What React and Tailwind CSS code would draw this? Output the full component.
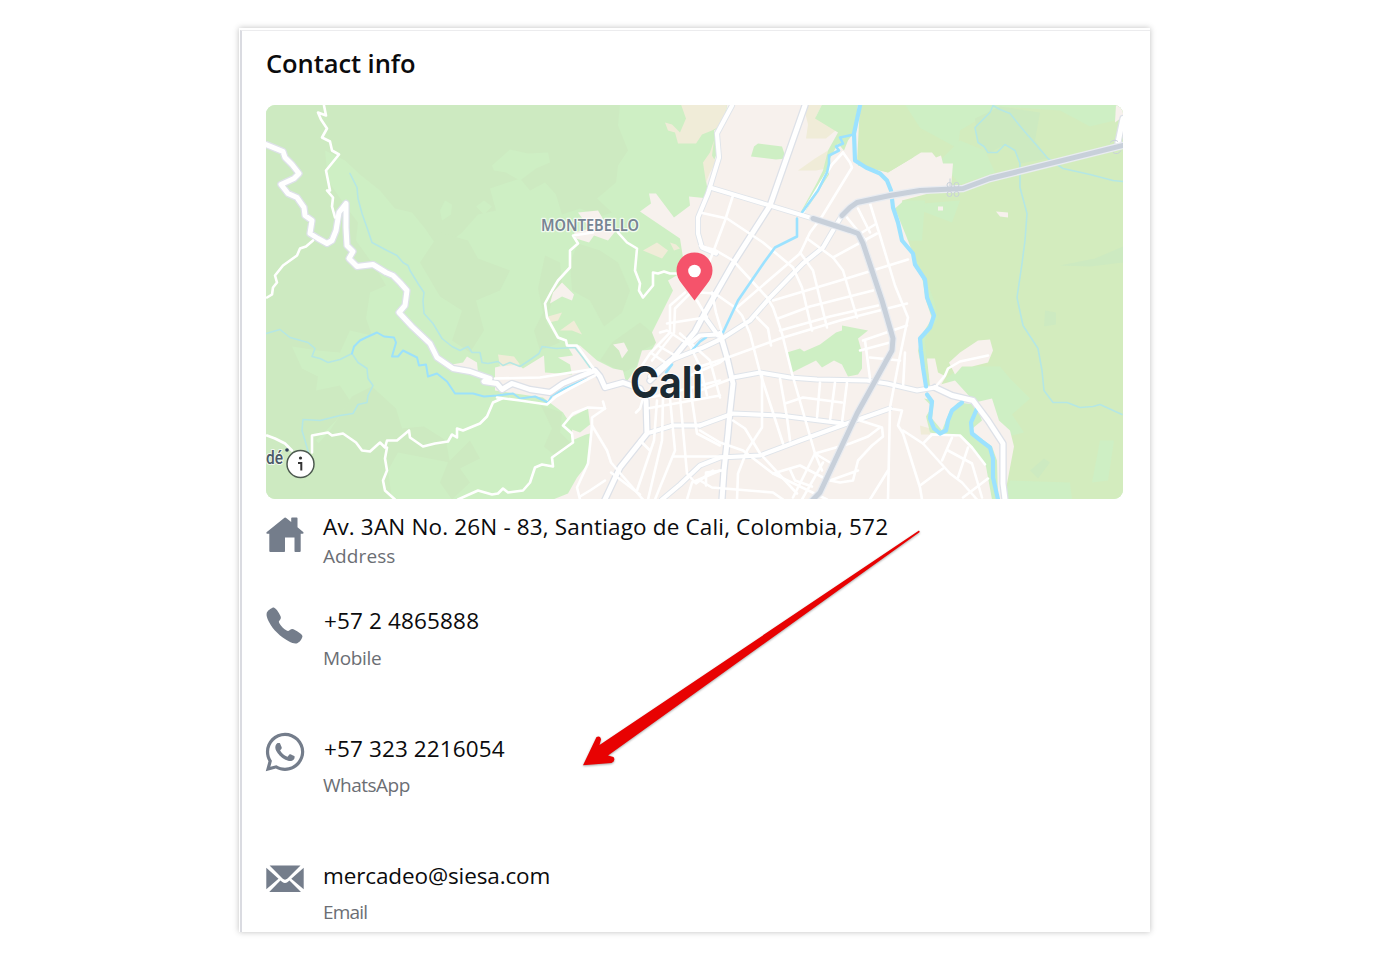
import { FaWhatsapp } from "react-icons/fa";
import { IoCall } from "react-icons/io5";

// the map is drawn in its own coordinate space, see viewBox below
const darkWoods = [
    "266,104 620,104 618,125 628,150 618,165 616,182 597,198 612,212 600,216 580,208 562,214 556,194 545,182 530,190 520,178 490,188 496,210 478,214 462,232 440,250 425,228 412,212 395,208 380,190 360,174 345,160 325,150 328,180 345,205 358,222 356,240 376,268 386,285 370,292 366,318 372,335 350,330 340,352 318,350 292,346 302,368 318,376 316,390 340,385 350,400 336,420 316,440 330,455 300,499 266,499",
    "352,396 372,386 396,408 402,428 424,426 446,440 450,462 398,452 388,470 392,499 300,499 312,450 330,430",
    "545,255 560,262 562,282 552,300 546,322 560,342 540,350 534,330 543,312 538,288",
    "578,243 600,250 618,262 630,290 622,312 604,326 590,300 572,290 570,262",
    "440,232 468,240 478,258 510,270 500,290 476,300 484,330 470,352 452,340 462,310 440,296 420,262",
    "652,332 656,343 642,350 636,366 623,372 600,360 612,342 640,322",
    "541,405 562,412 560,432 572,444 556,456 544,446 552,428",
    "490,420 470,440 480,458 460,468 470,482 452,499 440,482 448,462",
];

const lightWoods = [
    "492,165 510,149 528,153 548,152 550,162 536,168 520,180 506,172 494,170",
    "440,210 445,200 452,204 451,214 442,220",
    "476,206 484,200 492,206 484,214",
];

const eastPatches = [
    "975,118 1000,106 1040,112 1035,140 1048,158 1020,163 1015,150 1005,144 990,152 978,142",
    "1060,265 1095,258 1123,246 1123,262 1090,266",
    "1045,310 1056,312 1056,324 1044,326",
    "1030,470 1044,458 1050,462 1038,478",
];

const eastMeadows = [
    "858,104 1122,104 1123,118 1090,126 1060,110 1000,106 960,130 958,148 925,130 900,118",
    "940,160 960,140 985,150 995,172 960,184",
    "898,205 960,200 952,222 915,208",
    "946,378 962,366 1000,366 1010,378 1030,398 1012,414 1024,432 1000,438 984,406 962,398",
    "1010,480 1070,482 1072,499 1004,499",
    "1100,440 1114,440 1108,480 1092,482",
];

const sand = [
    "681,104 727,104 723,124 712,130 702,134 696,143 678,143 675,132 668,130 665,122 672,124 680,132 686,118",
    "714,140 712,155 716,162 710,172 706,182 703,162 710,152",
    "803,104 822,104 816,116 838,128 826,138 806,138 808,124",
    "798,170 815,158 828,150 826,168 816,170",
    "643,250 657,242 668,250 662,258",
    "670,242 676,244 680,248 674,250",
    "548,316 562,312 558,320 549,322",
    "560,330 574,320 582,334 572,330",
    "958,410 968,412 970,432 958,436 954,424",
    "498,354 514,356 520,364 500,366",
    "920,425 930,428 930,434 921,434",
];

const urban = [
    "727,104 870,104 858,165 888,172 913,157 921,152 932,152 936,157 941,155 943,163 953,163 951,187 902,200 908,240 920,272 930,300 936,318 922,340 926,388 955,380 975,402 992,398 999,420 1010,430 1014,446 1004,499 553,499 568,493 577,477 588,463 590,433 586,434 572,440 572,426 563,412 543,397 495,390 495,367 515,362 523,368 544,355 545,372 572,374 570,364 558,357 573,355 567,345 580,345 597,360 613,368 623,370 626,382 637,367 642,350 652,349 656,342 652,332 673,290 668,280 685,270 680,238 640,211 651,203 649,193 656,193 665,205 674,217 690,205 689,196 709,198 706,180 718,150 714,130 724,124",
    "578,212 598,210 604,220 616,230 608,240 594,235 589,242 576,238 574,232 590,228",
    "553,292 562,282 568,288 574,294 572,300 562,296 550,303",
    "452,364 463,362 467,356 477,362 478,372 460,370",
    "949,362 960,352 978,340 990,339 993,350 988,362 972,366 962,366 955,374",
    "613,344 624,342 628,350 622,358 619,350",
    "996,211 1008,212 1008,217 1000,216",
    "938,206 943,206 943,210 938,210",
    "1116,104 1123,106 1123,116 1115,122",
    "927,358 935,358 938,372 946,376 940,386 930,386",
];

const parks = [
    "822,104 858,104 854,132 848,140 844,150 838,143 829,160 829,174 806,210 800,213 817,182 823,170 828,150 838,132 815,118",
    "754,146 758,143 782,146 786,158 776,159 751,156",
    "787,352 800,348 804,351 820,344 836,332 842,330 842,325 868,330 858,338 862,352 862,368 858,374 848,376 842,364 834,360 822,367 816,360 792,372",
    "910,250 918,262 928,284 934,300 938,318 924,340 929,380 926,390 918,350 922,334 932,318 926,300 922,276",
    "924,398 934,400 932,418 942,430 950,410 958,402 976,404 982,420 970,430 992,446 997,460 998,499 992,499 986,466 975,450 960,436 942,434 930,432 926,416 932,406",
    "565,420 588,408 590,424 580,432 569,428",
];

const faintStreams = [
    "350,173 357,187 358,198 362,213 368,230 372,242 387,250 397,255 403,262 408,265 410,270 418,283 424,292 423,300 424,313 433,323 442,338 452,346 460,350 468,346 472,352 480,352 482,362 488,363 498,361 503,365 510,362 520,366 532,358 539,353 542,346 556,348 575,347 582,356 590,367",
    "266,333 280,329 290,337 308,342 315,348 312,356 320,358 328,362 340,359 352,353 358,362 367,368 368,378 373,385 368,395 367,402 358,404 353,413 340,415 320,420 303,419 302,430 305,440 309,454",
    "993,105 990,112 975,127 978,142 984,146 988,152 997,152 1005,144 1015,150 1020,163 1020,187 1027,213 1025,240 1022,263 1017,297 1023,325 1038,348 1042,370 1044,390 1053,402 1067,402 1080,407 1093,406 1100,404 1122,414",
    "993,105 1000,109 1010,113 1022,128 1048,158 1063,168 1090,174 1113,180 1123,181",
];

const streams = [
    "352,353 354,346 360,340 366,337 377,332 384,336 394,337 396,342 392,356 398,356 403,350 417,357 419,365 426,364 428,376 437,373 447,381 455,393 473,393 484,396 497,395 513,393 520,398 535,396 548,402 552,395 565,388 587,378",
];

const canals = [
    "854,134 840,137 843,143 836,146 839,150 829,155 829,163 827,172 818,190 802,212",
    "797,218 797,236 775,247 764,262 738,300 723,332",
    "706,337 700,341 692,350",
    "672,364 666,372",
];

const lanes = [
    "324,105 326,115 318,112 321,119 327,128 322,137 330,141 332,150 339,154 326,170 330,190 327,190 333,197 332,206 335,217",
    "313,240 306,246 300,248 297,255 283,265 275,275 277,282 273,287 272,294 267,297",
    "267,435 275,438 285,443 292,450",
    "312,452 312,435 328,432 332,435 343,433 356,442 362,450 370,451 380,442 385,447 387,440 397,440 409,430 410,437 423,446 435,443 448,441 452,434 457,437 457,428 463,430 480,423 487,416 493,402 502,398",
    "387,447 385,458 387,470 383,480 385,490 395,499",
    "458,499 478,490 492,494 498,493 503,488 508,492 523,490 530,482 535,467 542,464 553,466 552,457 573,442 572,433 563,425 573,413 588,407 605,408 603,401",
    "605,408 592,417 592,425 590,445 588,463 577,487 580,499",
    "592,425 607,450 611,462 643,499",
    "618,232 627,242 637,248 635,270 640,283 639,290 643,297 653,285 653,272 658,273 664,271 670,273 677,273",
    "593,232 573,235 578,243 570,250 570,267 558,280 552,290 545,303 547,317 558,337 566,340 567,345 577,345 595,370",
    "497,397 520,400 547,404 556,396 570,388 595,375",
    "495,378 540,377 590,369",
    "700,212 727,218 763,242 793,267 802,287 812,330",
    "700,245 716,250 733,260 767,297 773,307 782,333 792,373 815,453 822,470",
    "733,195 725,220 713,252 702,280",
    "700,292 715,293 735,307 742,315 750,333 760,372 783,443",
    "843,152 832,164 803,212",
    "843,152 850,162 852,167 822,216 810,232 800,253 737,307",
    "807,238 833,257 843,270 857,317",
    "800,252 813,270 827,327",
    "833,257 877,233",
    "773,300 840,280 908,259",
    "778,318 810,306 873,290",
    "780,330 830,316 878,305",
    "700,366 725,358 780,338 840,320 907,303",
    "870,203 880,235 895,285 908,317 899,360 890,407 888,499",
    "847,217 860,233 866,240",
    "858,208 870,232",
    "862,232 875,224",
    "863,340 907,325",
    "865,340 870,378",
    "860,350 890,342",
    "870,357 900,360",
    "905,352 903,387",
    "757,317 768,328 771,345",
    "647,408 720,395",
    "657,400 654,440 637,490",
    "663,397 662,440 648,499",
    "670,398 675,450 655,499",
    "680,396 687,473 696,483 713,470",
    "690,386 697,433 720,445",
    "673,456 742,456",
    "640,397 655,396 720,380",
    "636,412 640,408 643,398",
    "780,378 787,417 790,440",
    "820,382 817,417",
    "835,382 830,420",
    "847,382 842,422",
    "785,403 803,397 842,402",
    "762,372 762,427 747,450 738,473 737,499",
    "733,420 745,428 760,453 797,493",
    "700,430 720,442 743,450 773,473 827,499",
    "773,473 800,465 823,477",
    "790,469 795,480 812,486",
    "815,453 793,497",
    "823,462 802,499",
    "815,453 835,465",
    "700,480 712,487 773,492 783,499",
    "706,485 706,472 722,470",
    "815,453 850,443 868,436 880,427",
    "860,420 882,427 883,436 872,445 858,460 853,480 840,482 830,480 858,470",
    "888,470 870,499",
    "890,408 902,410 898,425 903,433 920,487 922,499",
    "903,430 923,443 950,473 962,482 977,499",
    "920,485 943,468",
    "942,460 952,437",
    "923,443 932,434 960,435 972,447 985,464",
    "948,450 972,463 982,497",
    "968,447 958,477",
    "963,497 988,478",
    "935,387 945,375 948,368 960,361 988,355",
    "685,292 670,305 670,332 650,353 640,368",
    "689,294 675,308 674,332 652,360",
    "667,323 705,317",
    "660,332 667,330 690,345 700,366 707,395",
    "658,345 675,355",
    "652,353 668,364",
    "680,333 710,360 720,397",
    "690,375 720,362 725,358",
    "712,292 716,312 722,332",
    "697,300 707,317",
    "700,390 716,384 732,378",
    "605,480 590,490 580,496",
    "611,472 640,494",
    "640,440 650,450",
    "687,499 692,482 720,470",
];

const avenues = [
    "732,105 717,133 719,157 708,193 698,217 698,233 702,247 716,253",
    "710,187 740,196 770,205 813,218",
    "842,215 837,223 823,247 803,263 770,297 750,320 722,338 703,347 670,360 650,376",
    "733,377 760,372 790,377 817,379 867,380 887,383 917,390 935,387",
    "700,425 733,413 780,415 843,423",
    "650,432 673,425 700,425",
    "662,499 680,484 700,465 720,457 760,455 800,440 847,423 890,408",
    "705,317 718,335",
    "690,343 700,335 718,334",
];

const highways = [
    "805,105 770,205 733,263 705,312 695,331 673,358 650,380",
    "266,144 283,151 285,157 292,164 299,173 294,178 281,184 288,193 297,197 304,207 305,215 312,220 310,233 318,238 327,243 332,240 336,230 339,212 346,203 346,227 347,245 353,251 349,258 357,266 373,264 386,272 393,275 400,282 407,290 405,305 399,312 412,326 430,343 437,357 453,368 470,371 490,378 484,381 497,383 502,389 512,383 530,389 550,392 563,383 580,376 595,370 600,376 605,387 623,382 640,388 646,400 647,433 620,467 605,499",
    "935,387 952,395 973,400 988,420 1003,443 1003,483 1005,499",
    "720,333 727,357 733,383 730,410 728,433 724,470 722,499",
    "1123,118 1118,142",
];

const motorways = [
    "813,218 850,230 858,233 863,243 882,300 893,338 892,350 857,413 820,492 812,500",
    "842,215 850,207 857,202 890,195 920,190 963,188 990,178 1123,145",
];

const Lines = ({ items, color, width }) => (
    <g fill="none" stroke={color} strokeWidth={width} strokeLinejoin="round" strokeLinecap="round">
        {items.map((p) => <polyline key={p} points={p} />)}
    </g>
);

const Areas = ({ items, color }) => (
    <g fill={color}>
        {items.map((p) => <polygon key={p} points={p} />)}
    </g>
);

function CityMap() {
    return (
        <svg viewBox="266 104.5 857 394" className="block h-[394px] w-[857px] rounded-[9px]">
            <rect x="266" y="104" width="857" height="396" fill="#ceefc4" />
            <Areas items={darkWoods} color="#cdeac1" />
            <Areas items={lightWoods} color="#ceefc4" />
            <polygon fill="#d3ecbe" points="858,104 1123,104 1123,499 998,499 1008,440 960,400 928,380 925,340 934,315 900,235 890,185 856,160" />
            <Areas items={eastMeadows} color="#ceefc4" />
            <Areas items={eastPatches} color="#cdeac1" />
            <Areas items={urban} color="#f7f1ed" />
            <polygon fill="#d3ecbe" points="860,104 905,104 925,135 913,157 888,172 857,162" />
            <polygon fill="#ceefc4" points="895,208 904,200 925,200 922,240 908,240" />
            <Areas items={sand} color="#f0ecd8" />
            <Areas items={parks} color="#ceefc4" />

            <Lines items={faintStreams} color="#b5e7e4" width="1.6" />
            <Lines items={streams} color="#9ce1fb" width="2" />

            <Lines items={avenues} color="#dfe4ea" width="6" />
            <Lines items={highways} color="#dde1e8" width="7.5" />
            <Lines items={lanes} color="#ffffff" width="2.6" />
            <Lines items={canals} color="#9ce2ff" width="2.6" />
            <Lines items={avenues} color="#ffffff" width="4.2" />

            <Lines
                items={[
                    "860,105 854,133 855,160 866,167 880,173 887,180 891,190 893,207 898,222 902,240 913,253 915,264 925,279 927,297 934,315 930,327 920,338 921,350 923,367 926,386",
                    "927,394 932,401 930,418 934,428 940,433 946,430 948,420 952,410 962,402",
                    "977,408 971,422 972,433 982,441 990,447 993,458 993,477 998,499",
                ]}
                color="#9ce2ff"
                width="4.2"
            />
            <Lines items={highways} color="#ffffff" width="5" />

            <Lines items={motorways} color="#e9ecf1" width="7.5" />
            <Lines items={motorways} color="#c8d0da" width="5" />
            <g fill="none" stroke="#c8d0da" strokeWidth="1">
                <circle cx="949.5" cy="184.5" r="2.5" />
                <circle cx="956.5" cy="184.5" r="2.5" />
                <circle cx="949.5" cy="193.5" r="2.5" />
                <circle cx="956.5" cy="193.5" r="2.5" />
                <path d="M950 178v8M1110 142q4-4 8-1M1113 152q5 3 8-2" />
            </g>

            <g stroke="#ffffff" strokeOpacity=".75" strokeLinejoin="round" paintOrder="stroke">
                <text x="541" y="230.5" textLength="98" lengthAdjust="spacingAndGlyphs" fontFamily="'Noto Sans', sans-serif" fontWeight="600" fontSize="15.5" fill="#778493" strokeWidth="2.5">MONTEBELLO</text>
                <text x="630" y="397.7" textLength="73" lengthAdjust="spacingAndGlyphs" fontFamily="Inter, sans-serif" fontWeight="700" fontSize="44" fill="#1b2a33" strokeWidth="2.5">Cali</text>
                <text x="266" y="463.5" textLength="17" lengthAdjust="spacingAndGlyphs" fontFamily="Roboto, sans-serif" fontWeight="500" fontSize="18" fill="#4b5a68" strokeWidth="2">dé</text>
            </g>
            <circle cx="287" cy="449.5" r="1.8" fill="#34445a" />

            <circle cx="300.5" cy="463.5" r="13.5" fill="#fff" stroke="#4d5a50" strokeWidth="1.5" />
            <circle cx="300.5" cy="457.5" r="1.6" fill="#333" />
            <path d="M298 462.5h3.300v7.500" fill="none" stroke="#333" strokeWidth="2" />

            <path d="M694.500 300 682 283.500C678.500 279 676.500 275 676.500 270a18 18 0 0 1 36 0c0 5-2 9-5.500 13.500Z" fill="#f5536b" />
            <circle cx="694.5" cy="270.5" r="6.3" fill="#fff" />
        </svg>
    );
}

const HouseIcon = () => (
    <svg viewBox="0 0 38 36" className="h-9 w-[38px]" fill="currentColor">
        <path d="M18.500.8Q19.300.3 20.200.9L25.200 5V1.200Q25.200.5 26 .5H30.700Q31.500.5 31.500 1.200V10.300L37.200 15Q38.200 16.500 36.500 16.700H34.700V34Q34.700 35 33.700 35H29.200Q28.500 35 28.500 34.200V20.500H19V34.200Q19 35 18.200 35H4.300Q3.300 35 3.300 34V16.700H1.200Q-.3 16.500.8 15Z" />
    </svg>
);

const MailIcon = () => (
    <svg viewBox="0 0 38 28" className="h-7 w-[38px]" fill="currentColor">
        <path d="M3.600.5H34.500L21.500 13.500Q19 15.800 16.500 13.500ZM.3 2.800 12.500 13.800.3 24.200ZM37.700 2.800V24.200L25.300 13.800ZM14.400 15.400 16.300 17Q19 18.800 21.700 17L23.500 15.400 35 27H3.200Z" />
    </svg>
);

function ContactRow({ icon, iconClass, value, valueClass, label, labelClass, className }) {
    return (
        <div className={`flex gap-[19px] ${className}`}>
            <div className={`w-[38px] shrink-0 text-[#747d8b] ${iconClass}`}>{icon}</div>
            <div className="flex flex-col whitespace-nowrap">
                <span className={`text-[22.5px] leading-[30px] text-[#0b0b0d] ${valueClass}`}>{value}</span>
                <span className={`text-[19px] leading-6 text-[#6b6e74] ${labelClass}`}>{label}</span>
            </div>
        </div>
    );
}

function App() {
    return (
        <div className="flex h-[960px] w-[1390px] bg-white pt-[28px] pl-[239px] font-['Open_Sans','Noto_Sans',sans-serif]">
            <div className="relative h-[904px] w-[911px] bg-white shadow-[0_0_6px_rgba(0,0,0,0.25)]">
                <div className="mt-[2px] ml-[1px] h-[902px] w-[910px] border-t border-l-2 border-t-[#ececee] border-l-[#dadbe1] pl-[24px]">
                    <h1 className="pt-[16px] text-[25.5px] leading-[32px] font-semibold text-[#0b0b0d]">
                        <span className="inline-block tracking-[-0.07px]">Contact info</span>
                    </h1>
                    <div className="mt-[25.5px]">
                        <CityMap />
                    </div>

                    <div className="mt-[13px]">
                        <ContactRow
                            className="h-[94px]"
                            icon={<HouseIcon />}
                            iconClass="pt-[5px]"
                            value="Av. 3AN No. 26N - 83, Santiago de Cali, Colombia, 572"
                            valueClass="tracking-[0.16px]"
                            label="Address"
                            labelClass="mt-[2px] tracking-[0.1px]"
                        />
                        <ContactRow
                            className="h-[128px]"
                            icon={<IoCall className="-ml-[2px] size-[41px]" />}
                            iconClass="-mt-[1px]"
                            value="+57 2 4865888"
                            valueClass="pl-px tracking-[0.15px]"
                            label="Mobile"
                            labelClass="mt-[10px] tracking-[-0.35px]"
                        />
                        <ContactRow
                            className="h-[127px]"
                            icon={<FaWhatsapp className="-ml-[3px] size-[44px]" />}
                            iconClass="-mt-[4px]"
                            value="+57 323 2216054"
                            valueClass="pl-px tracking-[0.12px]"
                            label="WhatsApp"
                            labelClass="mt-[9px] tracking-[-0.5px]"
                        />
                        <ContactRow
                            className="h-[70px]"
                            icon={<MailIcon />}
                            iconClass="pt-[4px]"
                            value="mercadeo@siesa.com"
                            valueClass="tracking-[-0.12px]"
                            label="Email"
                            labelClass="mt-[9px] tracking-[-0.8px]"
                        />
                    </div>
                </div>

                {/* pointer towards the WhatsApp number */}
                <svg viewBox="580 526 344 244" className="absolute top-[498px] left-[341px] h-[244px] w-[344px] drop-shadow-[0_1px_1px_rgba(0,0,0,0.35)]">
                    <path d="M919 530.500 599.500 745 601 739.500Q600.500 735.500 596.500 737L583 765.300 611.500 763Q616 761 613.500 757L608 755.500 919.800 532Z" fill="#e80202" />
                </svg>
            </div>
        </div>
    );
}

export default App;
